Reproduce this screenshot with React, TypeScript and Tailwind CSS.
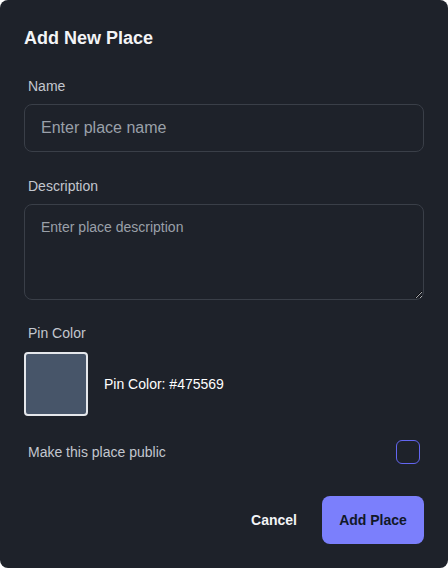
import React from "react";

export default function App() {
  return (
    <div
      className="w-[448px] h-[568px] bg-[#1e222a] text-white rounded-lg overflow-hidden"
      style={{ fontFamily: '"Liberation Sans", Arial, sans-serif' }}
    >
      <div className="px-6 pt-[27px]">
        <h2 className="text-[18px] leading-[22px] font-bold text-[#f3f4f6]">Add New Place</h2>

        <div className="mt-[29px]">
          <label className="block px-1 text-[14px] leading-[16px] text-[#c3c7cf]">Name</label>
          <input
            className="mt-[10px] w-full h-[48px] rounded-lg border border-[#3a3f48] bg-[#1e222a] px-4 text-[16px] text-white placeholder-[#9aa0a9] outline-none"
            placeholder="Enter place name"
          />
        </div>

        <div className="mt-[26px]">
          <label className="block px-1 text-[14px] leading-[16px] text-[#c3c7cf]">Description</label>
          <textarea
            className="mt-[10px] block w-full h-[96px] rounded-lg border border-[#3a3f48] bg-[#1e222a] px-4 py-[14px] text-[14px] leading-[16px] text-white placeholder-[#9aa0a9] outline-none"
            placeholder="Enter place description"
          />
        </div>

        <div className="mt-[25px]">
          <label className="block px-1 text-[14px] leading-[16px] text-[#c3c7cf]">Pin Color</label>
          <div className="mt-[11px] flex items-center gap-4">
            <div className="w-[64px] h-[64px] rounded border-2 border-[#e5e7eb] bg-[#475569]" />
            <span className="text-[14px] text-white">Pin Color: #475569</span>
          </div>
        </div>

        <div className="mt-[24px] flex items-center justify-between pl-1 pr-1">
          <span className="text-[14px] text-[#c3c7cf]">Make this place public</span>
          <div className="w-[24px] h-[24px] rounded-md border-[1.5px] border-[#6366f1]" />
        </div>

        <div className="mt-[32px] flex items-center justify-end gap-[25px]">
          <button className="text-[14px] font-bold text-[#f3f4f6]">Cancel</button>
          <button className="h-[48px] w-[102px] rounded-lg bg-[#7b7ffc] text-[14px] font-bold text-[#111827]">
            Add Place
          </button>
        </div>
      </div>
    </div>
  );
}
